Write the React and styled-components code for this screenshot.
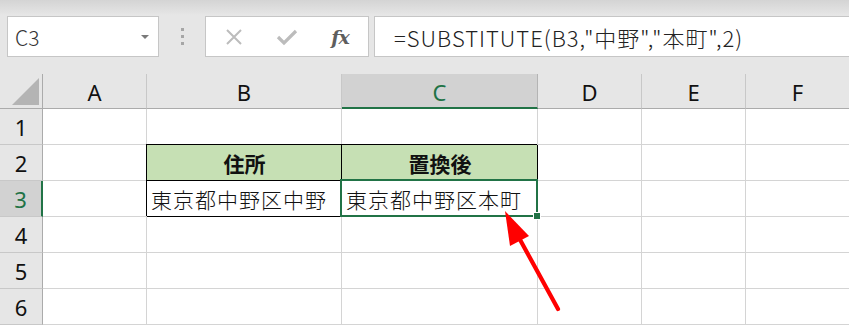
import React from "react";
import styled, { createGlobalStyle, css } from "styled-components";

const Global = createGlobalStyle`
  html, body { margin: 0; padding: 0; }
  body {
    width: 849px; height: 325px; overflow: hidden;
    background: #e6e6e6;
    font-family: "Noto Sans CJK JP", "Noto Sans", sans-serif;
  }
`;

const Page = styled.div`
  position: relative;
  width: 849px;
  height: 325px;
  overflow: hidden;
  background: linear-gradient(#d4d4d4 0px, #e2e2e2 12px, #e6e6e6 15px);
`;

const FormulaBar = styled.div`
  display: flex;
  align-items: stretch;
  height: 41px;
  padding: 16px 0 0 7px;
`;

const Box = styled.div`
  box-sizing: border-box;
  background: #fff;
  border: 1px solid #c6c6c6;
  display: flex;
  align-items: center;
`;

const NameBox = styled(Box)`
  width: 152px;
  padding: 0 0 0 7px;
  justify-content: space-between;
  font-size: 21px;
  font-weight: 300;
  color: #333;
`;

const DropArrow = styled.span`
  width: 0; height: 0;
  margin-right: 9px;
  border-left: 4px solid transparent;
  border-right: 4px solid transparent;
  border-top: 4px solid #7a7a7a;
`;

const Grip = styled.div`
  width: 46px;
  display: flex;
  flex-direction: column;
  align-items: center;
  justify-content: center;
  gap: 4px;
  span { width: 3px; height: 3px; background: #a6a6a6; }
`;

const FnBox = styled(Box)`
  width: 164px;
  padding: 0 0 0 17px;
`;

const IconSlot = styled.div`
  width: ${p => p.$w}px;
  display: flex;
  justify-content: center;
  align-items: center;
`;

const Fx = styled.span`
  font-family: "DejaVu Serif", "Liberation Serif", serif;
  font-style: italic;
  font-weight: bold;
  font-size: 19px;
  color: #5e5e5e;
  letter-spacing: -1px;
`;

const FormulaBox = styled(Box)`
  flex: 1;
  margin-left: 5px;
  margin-right: -4px;
  padding-left: 19px;
  font-size: 22px;
  font-weight: 300;
  letter-spacing: 1px;
  color: #222;
  white-space: nowrap;
`;

const Sheet = styled.div`
  margin-top: 16px;
  display: grid;
  grid-template-columns: 43px 104px 195px 196px 104px 104px 104px;
  grid-auto-rows: 36px;
`;

const Cell = styled.div`
  position: relative;
  box-sizing: border-box;
  background: #fff;
  border-right: 1px solid #d4d4d4;
  border-bottom: 1px solid #d4d4d4;
  display: flex;
  align-items: center;
  padding: 0 3px 0 4px;
  font-size: 21px;
  font-weight: 300;
  letter-spacing: 1px;
  color: #111;
  white-space: nowrap;
  ${p => p.$outlined && css`
    border-right-color: #000;
    border-bottom-color: #000;
    box-shadow: -1px -1px 0 0 #000;
  `}
  ${p => p.$head && css`
    background: #c6e0b4;
    justify-content: center;
    font-weight: bold;
    letter-spacing: 0;
  `}
  ${p => p.$selected && css`
    &::after {
      content: "";
      position: absolute;
      top: -2px; left: -2px; right: -1px; bottom: -1px;
      border: 2px solid #217346;
      pointer-events: none;
    }
  `}
`;

const FillHandle = styled.span`
  position: absolute;
  right: -4px;
  bottom: -4px;
  width: 6px;
  height: 6px;
  background: #217346;
  border: 1px solid #fff;
  z-index: 2;
`;

const Header = styled.div`
  box-sizing: border-box;
  background: ${p => (p.$active ? "#d2d2d2" : "#e6e6e6")};
  color: ${p => (p.$active ? "#217346" : "#111")};
  display: flex;
  align-items: center;
  justify-content: center;
  font-family: "Noto Sans", "Open Sans", sans-serif;
  font-size: 22px;
`;

const ColHead = styled(Header)`
  border-right: 1px solid ${p => (p.$active ? "#b4b4b4" : "#c8c8c8")};
  border-bottom: ${p => (p.$active ? "2px solid #217346" : "1px solid #ababab")};
  padding-top: 2px;
  margin-top: 1px;
`;

const RowHead = styled(Header)`
  border-right: ${p => (p.$active ? "2px solid #217346" : "1px solid #ababab")};
  border-bottom: 1px solid #c8c8c8;
`;

const Corner = styled.div`
  box-sizing: border-box;
  background: #e6e6e6;
  border-right: 1px solid #ababab;
  border-bottom: 1px solid #ababab;
  position: relative;
  margin-top: 1px;
  &::after {
    content: "";
    position: absolute;
    right: 3px;
    bottom: 3px;
    width: 0; height: 0;
    border-left: 27px solid transparent;
    border-bottom: 27px solid #b4b4b4;
  }
`;

const Arrow = styled.svg`
  position: absolute;
  left: 0;
  top: 0;
  pointer-events: none;
`;

const cols = ["A", "B", "C", "D", "E", "F"];

export default function App() {
  const rows = [1, 2, 3, 4, 5, 6];
  const content = {
    "2-B": { text: "住所", head: true, outlined: true },
    "2-C": { text: "置換後", head: true, outlined: true },
    "3-B": { text: "東京都中野区中野", outlined: true },
    "3-C": { text: "東京都中野区本町", outlined: true, selected: true },
  };
  return (
    <>
      <Global />
      <Page>
        <FormulaBar>
          <NameBox>
            C3
            <DropArrow />
          </NameBox>
          <Grip>
            <span />
            <span />
            <span />
          </Grip>
          <FnBox>
            <IconSlot $w={22}>
              <svg width="18" height="18" viewBox="0 0 18 18">
                <path d="M2 2 L16 16 M16 2 L2 16" stroke="#bcbcbc" strokeWidth="2" fill="none" />
              </svg>
            </IconSlot>
            <IconSlot $w={84}>
              <svg width="22" height="18" viewBox="0 0 22 18">
                <path d="M2 9 L8 15 L20 3" stroke="#bcbcbc" strokeWidth="3.2" fill="none" />
              </svg>
            </IconSlot>
            <IconSlot $w={22}>
              <Fx>fx</Fx>
            </IconSlot>
          </FnBox>
          <FormulaBox>=SUBSTITUTE(B3,"中野","本町",2)</FormulaBox>
        </FormulaBar>
        <Sheet>
          <Corner />
          {cols.map(c => (
            <ColHead key={c} $active={c === "C"}>{c}</ColHead>
          ))}
          {rows.map(r => (
            <React.Fragment key={r}>
              <RowHead $active={r === 3}>{r}</RowHead>
              {cols.map(c => {
                const d = content[`${r}-${c}`];
                return (
                  <Cell
                    key={c}
                    $outlined={d?.outlined}
                    $head={d?.head}
                    $selected={d?.selected}
                  >
                    {d?.text}
                    {d?.selected && <FillHandle />}
                  </Cell>
                );
              })}
            </React.Fragment>
          ))}
        </Sheet>
        <Arrow width="849" height="325" viewBox="0 0 849 325">
          <line x1="558" y1="309" x2="518" y2="236" stroke="#ff0000" strokeWidth="4.2" strokeLinecap="round" />
          <polygon points="505,211 510,246 529,236" fill="#ff0000" />
        </Arrow>
      </Page>
    </>
  );
}
